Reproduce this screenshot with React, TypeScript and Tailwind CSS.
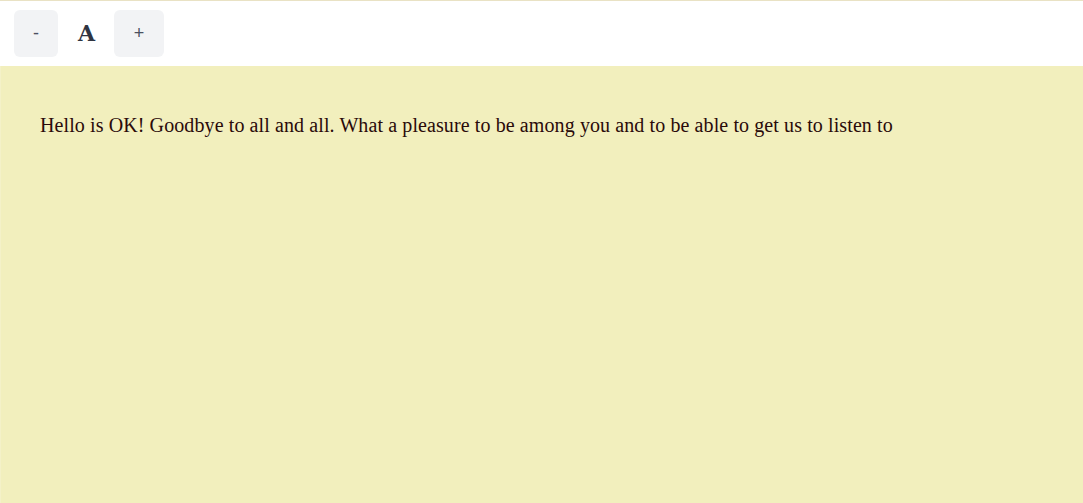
export default function App() {
  return (
    <div className="flex min-h-[503px] flex-col bg-white">
      <div className="flex h-[66px] items-start gap-[20px] border-t border-[#e9e2c4] bg-white pl-[14px] pt-[9px]">
        <button className="flex h-[47px] w-[44px] items-center justify-center rounded-md bg-[#f2f3f5] text-[18px] text-[#4b5060] [font-family:'Liberation_Sans',sans-serif]">
          -
        </button>
        <span className="flex h-[47px] items-center text-[22px] font-bold text-[#2f3441] [font-family:'DejaVu_Serif',serif]">
          A
        </span>
        <button className="-ml-px flex h-[47px] w-[50px] items-center justify-center rounded-md bg-[#f2f3f5] text-[18px] text-[#4b5060] [font-family:'Liberation_Sans',sans-serif]">
          +
        </button>
      </div>
      <div className="flex-1 border-l border-[#f4f1c8] bg-[#f2efbd] pl-[39px] pr-[40px] pt-[45px]">
        <p className="text-[20px] leading-[28px] tracking-[0.1px] text-[#2a0a0a] [font-family:'Liberation_Serif',serif]">
          Hello is OK! Goodbye to all and all. What a pleasure to be among you and to be able to get us to listen to
        </p>
      </div>
    </div>
  );
}
